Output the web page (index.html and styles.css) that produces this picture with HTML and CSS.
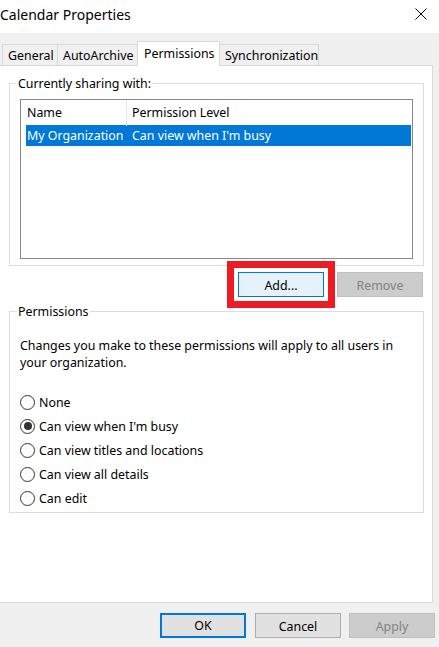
FILE: index.html
```html
<!DOCTYPE html>
<html>
<head>
<meta charset="utf-8">
<link rel="stylesheet" href="styles.css">
</head>
<body>
<div class="window">
  <div class="titlebar">
    <span class="title">Calendar Properties</span>
    <svg class="close" width="12" height="12" viewBox="0 0 12 12"><path d="M0.5 0.5 L11.5 11.5 M11.5 0.5 L0.5 11.5" stroke="#000" stroke-width="1" fill="none"/></svg>
  </div>
  <div class="tabs">
    <div class="tab t-general">General</div>
    <div class="tab t-archive">AutoArchive</div>
    <div class="tab t-perm active">Permissions</div>
    <div class="tab t-sync">Synchronization</div>
  </div>
  <div class="panel">
    <fieldset class="group share">
      <legend>Currently sharing with:</legend>
      <div class="listview">
        <div class="lv-header">
          <div class="hc hc1">Name</div>
          <div class="hc hc2">Permission Level</div>
        </div>
        <div class="lv-row selected">
          <div class="rc rc1">My Organization</div>
          <div class="rc rc2">Can view when I'm busy</div>
        </div>
      </div>
    </fieldset>
    <div class="share-buttons">
      <button class="btn add">Add...</button>
      <button class="btn disabled">Remove</button>
    </div>
    <fieldset class="group perms">
      <legend>Permissions</legend>
      <p class="note">Changes you make to these permissions will apply to all users in your organization.</p>
      <div class="radios">
        <div class="radio"><span class="circle"></span><span class="rlabel">None</span></div>
        <div class="radio"><span class="circle checked"></span><span class="rlabel">Can view when I'm busy</span></div>
        <div class="radio"><span class="circle"></span><span class="rlabel">Can view titles and locations</span></div>
        <div class="radio"><span class="circle"></span><span class="rlabel">Can view all details</span></div>
        <div class="radio"><span class="circle"></span><span class="rlabel">Can edit</span></div>
      </div>
    </fieldset>
  </div>
  <div class="footer">
    <button class="btn ok">OK</button>
    <button class="btn cancel">Cancel</button>
    <button class="btn disabled apply">Apply</button>
  </div>
</div>
</body>
</html>
```
FILE: styles.css
```css
* { box-sizing: border-box; }
html, body {
  margin: 0;
  padding: 0;
  background: #f0f0f0;
}
body {
  width: 439px;
  height: 647px;
  overflow: hidden;
  font-family: "Noto Sans", "Open Sans", sans-serif;
  font-size: 12.4px;
  color: #000;
}
.window {
  width: 439px;
  height: 647px;
}
.titlebar {
  height: 33px;
  background: #fff;
  display: flex;
  align-items: center;
  justify-content: space-between;
  padding: 0 12px 0 0;
}
.title {
  font-size: 14px;
  line-height: 20px;
  margin-top: -3px;
  padding-left: 0;
}
.close {
  display: block;
  margin-top: -5px;
}
.tabs {
  height: 32px;
  display: flex;
  align-items: flex-end;
  padding-left: 2px;
}
.tab {
  height: 21px;
  border: 1px solid #d9d9d9;
  border-bottom: none;
  border-right: none;
  background: #f0f0f0;
  line-height: 22px;
  padding-left: 5px;
  white-space: nowrap;
}
.t-general { width: 55px; }
.t-archive { width: 80px; }
.t-perm { width: 83px; }
.t-sync { width: 100px; border-right: 1px solid #d9d9d9; }
.tab.active {
  height: 25px;
  margin-bottom: -1px;
  background: #fff;
  border-right: 1px solid #d9d9d9;
  margin-right: -1px;
  position: relative;
  z-index: 1;
  line-height: 23px;
  padding-left: 6px;
}
.panel {
  width: 433px;
  height: 538px;
  background: #fff;
  border: 1px solid #d9d9d9;
  border-left: none;
  padding-top: 9px;
}
.group {
  margin: 0 8px 0 9px;
  border: 1px solid #dcdcdc;
  padding: 0;
  min-width: 0;
}
.group legend {
  margin-left: -3px;
  padding: 0 1px;
  line-height: 18px;
  height: 17px;
}
.share {
  padding: 7px 10px 6px 10px;
}
.listview {
  height: 160px;
  border: 1px solid #828790;
  background: #fff;
}
.lv-header {
  display: grid;
  grid-template-columns: 106px 1fr;
  height: 25px;
}
.hc {
  line-height: 26px;
  white-space: nowrap;
}
.hc1 {
  padding-left: 6px;
  border-right: 1px solid #e5e5e5;
  margin: 0 0 1px 0;
}
.hc2 { padding-left: 5px; }
.lv-row {
  display: grid;
  grid-template-columns: 101px 1fr;
  height: 21px;
  margin: 0 1px 0 5px;
}
.lv-row.selected {
  background: #0078d7;
  color: #fff;
}
.rc {
  line-height: 22px;
  white-space: nowrap;
  overflow: hidden;
}
.rc1 { padding-left: 1px; }
.rc2 { padding-left: 5px; }
.share-buttons {
  display: flex;
  justify-content: flex-end;
  gap: 13px;
  padding-right: 9px;
  margin-top: 6px;
  height: 25px;
}
.btn {
  width: 86px;
  height: 25px;
  font-family: inherit;
  font-size: 12.4px;
  color: #000;
  background: #e1e1e1;
  border: 1px solid #adadad;
  padding: 2px 0 0 0;
  margin: 0;
  line-height: 20px;
}
.btn.add {
  background: #e5f1fb;
  border-color: #0078d7;
  outline: 7px solid #ed1c24;
  outline-offset: 4px;
}
.btn.disabled {
  background: #cccccc;
  border-color: #bfbfbf;
  color: #838383;
}
.perms {
  margin-top: 6px;
  padding: 17px 10px 2px 10px;
}
.note {
  margin: 0;
  line-height: 17px;
  width: 392px;
}
.radios {
  margin-top: 19px;
}
.radio {
  display: flex;
  align-items: center;
  height: 24px;
}
.rlabel {
  padding-top: 1px;
}
.circle {
  width: 15px;
  height: 15px;
  border: 1px solid #333;
  border-radius: 50%;
  display: flex;
  align-items: center;
  justify-content: center;
  margin-right: 4px;
  background: #fff;
}
.circle.checked::after {
  content: "";
  width: 8px;
  height: 8px;
  border-radius: 50%;
  background: #333;
}
.footer {
  display: flex;
  padding: 10px 4px 0 160px;
  gap: 9px;
}
.btn.ok {
  border: 2px solid #0078d7;
  padding-top: 1px;
}
.btn.apply { margin-left: -1px; }
```
